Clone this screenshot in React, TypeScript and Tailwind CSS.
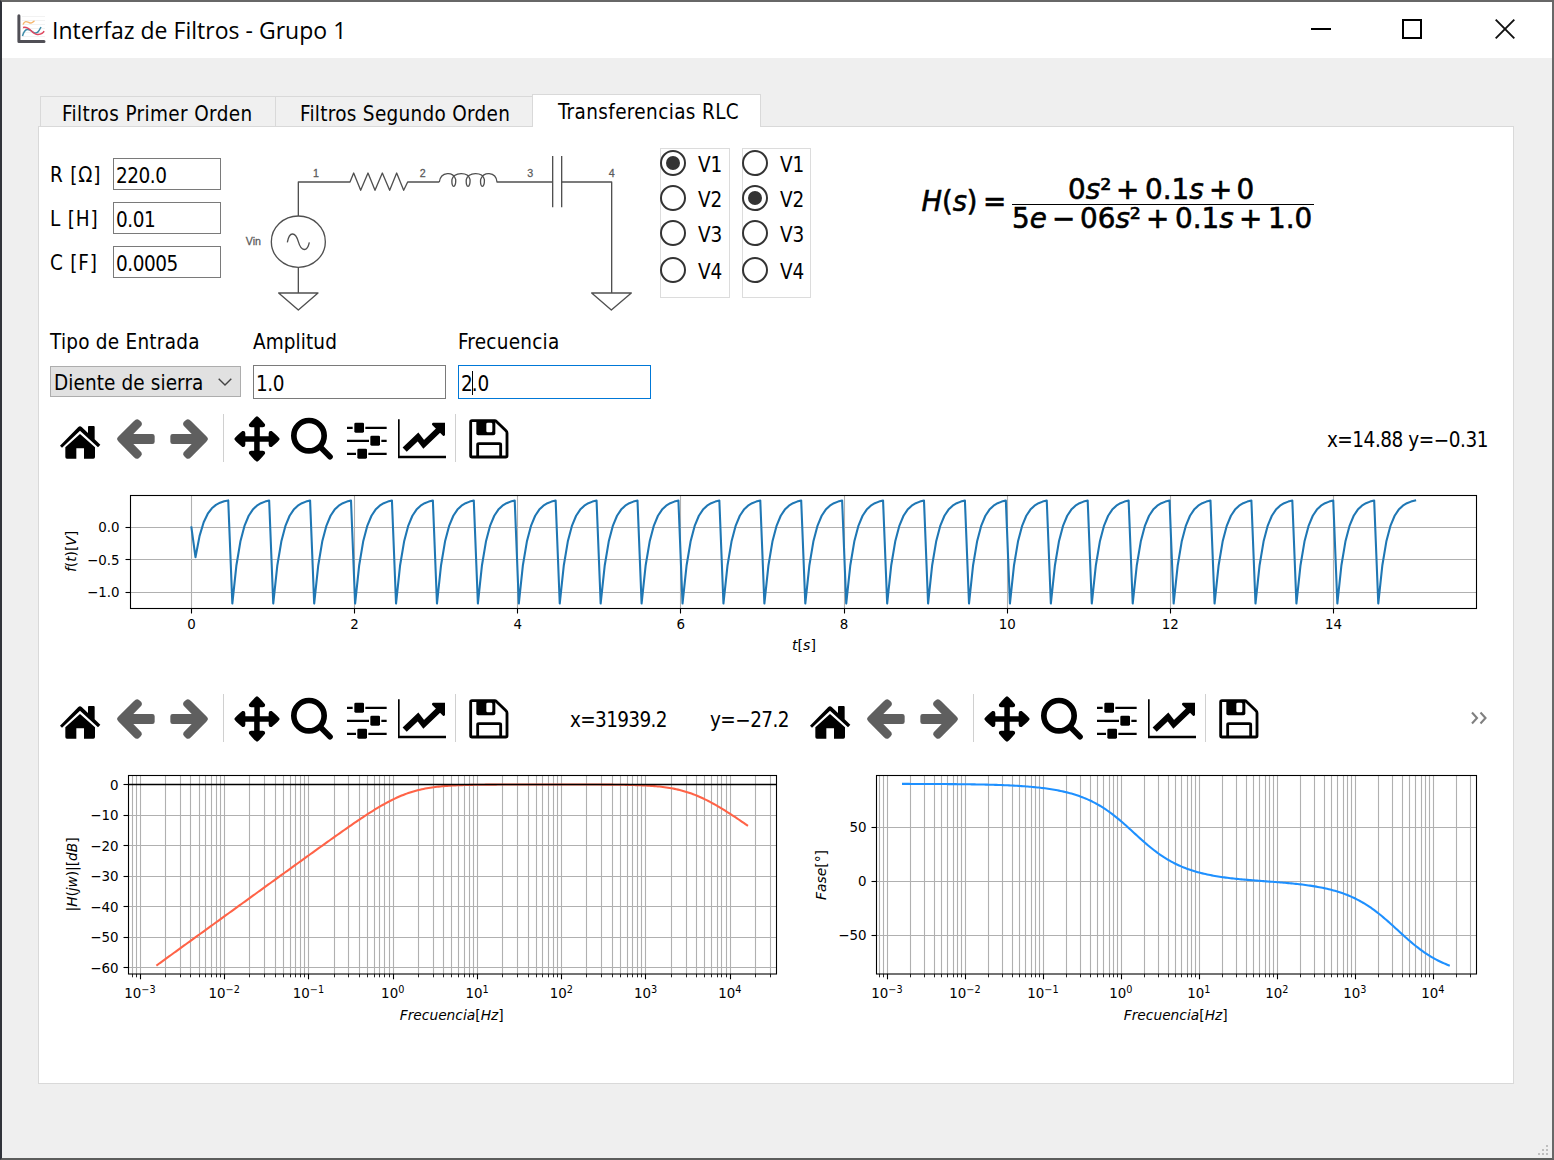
import React from "react";

const base = 'font-["DejaVu_Sans_Condensed","DejaVu_Sans",sans-serif] [font-stretch:condensed] text-[20.5px] leading-none text-black whitespace-pre';
const ui = base + " tracking-[0.25px]";
const tab = base + " tracking-[0.37px]";
const num = base + " tracking-[-0.45px]";
const PLOT_FONT = '"DejaVu Sans", sans-serif';

type IconProps = { x: number; w: number; className: string; children: React.ReactNode };

function Icon({ x, w, className, children }: IconProps) {
  return (
    <svg width={w} height={48} viewBox={`${x} 282 ${w * 3} 144`} className={`shrink-0 ${className}`}>
      {children}
    </svg>
  );
}

const ARROW =
  "M231 357 q1 -4 5 -8 L282 303 q8 -9 15 -3 l7 6 q4 6 0 11 L280 342 H337 q7 0 7 7 v16 q0 7 -7 7 H280 l24 25 q4 6 -1 11 l-6 6 q-7 6 -15 -2 L236 365 q-4 -4 -5 -8Z";
const ARM = "M651 289 q-4 0 -24 24 q-2 9 7 9 H643 V357 H659.5 V322 H668 q9 0 7 -9 Q655 289 651 289Z";

function Toolbar({ children }: { children?: React.ReactNode }) {
  return (
    <div className="flex h-12 shrink-0 items-center">
      <Icon x={54} w={44} className="ml-2">
        <path d="M60 377 L115 321 q5 -5 10 0 L144 339 V320 q0 -2 3 -2 H161 q3 0 3 3 V358 L181 374 L174 382 L120 332 L66 383Z" />
        <path d="M76 382 L120 342 L165 382 V411 q0 5 -5 5 H132 V385 H109 V416 H81 q-5 0 -5 -5Z" />
      </Icon>
      <Icon x={225} w={43} className="ml-[13px]">
        <path d={ARROW} fill="#5f5f5f" />
      </Icon>
      <Icon x={384} w={43} className="ml-[10px]">
        <path d={ARROW} fill="#5f5f5f" transform="translate(735 0) scale(-1 1)" />
      </Icon>
      <div className="ml-3 h-12 w-px bg-[#d0d0d0]" />
      <Icon x={579} w={48} className="ml-[9px]">
        {[0, 90, 180, 270].map((a) => (
          <path key={a} d={ARM} transform={`rotate(${a} 651 357)`} />
        ))}
      </Icon>
      <Icon x={747} w={46} className="ml-2">
        <circle cx="807" cy="347" r="45.5" fill="none" stroke="#000" strokeWidth="17" />
        <path d="M841 381 L870 410" stroke="#000" strokeWidth="17" strokeLinecap="round" />
      </Icon>
      <Icon x={915} w={43} className="ml-[10px]">
        <path
          d="M921 323.5 H938 M976 323.5 H1040 M921 362.5 H987 M1024 362.5 H1040 M921 401.5 H948 M985 401.5 H1040"
          stroke="#000"
          strokeWidth="7"
        />
        <rect x="943" y="308" width="29" height="30" rx="4" />
        <rect x="991" y="347" width="29" height="30" rx="4" />
        <rect x="952" y="386" width="29" height="30" rx="4" />
      </Icon>
      <Icon x={1071} w={50} className="ml-[9px]">
        <path d="M1074 298 H1079 V407 H1218 V415 H1074Z" />
        <path d="M1094 389 L1134 351 L1151 373 L1198 328" fill="none" stroke="#000" strokeWidth="18" />
        <path d="M1176 314 q-1 -4 3 -6 H1215 V345 q-3 4 -6 2Z" />
      </Icon>
      <div className="ml-2 h-12 w-px bg-[#d0d0d0]" />
      <Icon x={1284} w={42} className="ml-3">
        <path
          d="M1296 302 H1364 Q1367 302 1370 305 L1398 332 Q1401 335 1401 339 V407 q0 4 -4 4 H1296 q-4 0 -4 -4 V306 q0 -4 4 -4Z"
          fill="none"
          stroke="#000"
          strokeWidth="8.5"
        />
        <path d="M1309 302 H1366 V340 q0 6 -6 6 H1315 q-6 0 -6 -6Z" />
        <rect x="1339" y="308" width="18" height="29" rx="4" fill="#fff" />
        <path d="M1313 411 V374 q0 -3 4 -3 H1378 q4 0 4 3 V411" fill="none" stroke="#000" strokeWidth="8.5" />
      </Icon>
      {children}
    </div>
  );
}

function Field({ label, value }: { label: string; value: string }) {
  return (
    <div className="flex h-8 items-center justify-between">
      <span className={`pt-[3px] ${base} tracking-[0.8px]`}>{label}</span>
      <div className={`flex h-8 w-[108px] items-center border border-[#7a7a7a] bg-white pl-[2px] pt-[4px] ${num}`}>{value}</div>
    </div>
  );
}

function Radios({ selected, className }: { selected: number; className: string }) {
  return (
    <div className={`mt-[21px] h-[150px] shrink-0 border border-[#dcdcdc] pt-[1px] ${className}`}>
      {[1, 2, 3, 4].map((n) => (
        <div key={n} className={`flex h-[26px] items-center ${n === 4 ? "mt-[11px]" : n === 1 ? "" : "mt-[9px]"}`}>
          <div className="-ml-[1px] flex h-[26px] w-[26px] items-center justify-center rounded-full border-2 border-[#333]">
            {selected === n && <div className="h-[14px] w-[14px] rounded-full bg-[#333]" />}
          </div>
          <span className={`ml-3 pt-[4px] ${base}`}>{`V${n}`}</span>
        </div>
      ))}
    </div>
  );
}

function Circuit() {
  return (
    <svg width={420} height={180} viewBox="0 0 1260 540" className="ml-[9px] mt-[13px] shrink-0">
      <g fill="none" stroke="#505050" strokeWidth="4" strokeLinejoin="round">
        <path d="M205 228 V126 H360 L371 99 L392 151 L414 99 L435 151 L457 99 L479 151 L500 99 L521 151 L533 126 H628" />
        <path d="M628 126 C632 94 672 94 677 118 C679 146 663 146 666 118 C672 96 714 94 720 118 C722 146 706 146 709 118 C715 96 757 94 763 118 C765 146 749 146 752 118 C758 94 798 94 801 126 H968" />
        <path d="M968 48 V202 M995 48 V202 M995 126 H1145 V459" />
        <ellipse cx="205" cy="305" rx="81" ry="77" />
        <path d="M172 307 C178 274 196 274 205 305 C214 336 232 336 238 307" />
        <path d="M205 382 V459" />
        <path d="M146 459 H264 L205 510Z M1085 459 H1204 L1144 510Z" />
      </g>
      <g fontFamily='"Liberation Sans", sans-serif' fontSize="32" fill="#5a5a5a" stroke="#5a5a5a" strokeWidth="0.8" textAnchor="middle">
        <text x="258" y="112">1</text>
        <text x="578" y="112">2</text>
        <text x="901" y="112">3</text>
        <text x="1145" y="112">4</text>
        <text x="70" y="316">Vin</text>
      </g>
    </svg>
  );
}

function Formula() {
  const I = ({ children }: { children: string }) => <tspan fontStyle="italic">{children}</tspan>;
  return (
    <svg width={430} height={90} viewBox="0 0 430 90" className="ml-[89px] mt-[33px] shrink-0">
      <g fontFamily={PLOT_FONT} fontSize="27.8" fill="#000" stroke="#000" strokeWidth="0.6">
        <text x="21.5" y="51" textLength="56" lengthAdjust="spacingAndGlyphs"><I>H</I>(<I>s</I>)</text>
        <text x="83" y="51">=</text>
        <text x="168" y="38.5"><tspan>0</tspan><I>s</I>²</text>
        <text x="216" y="38.5">+</text>
        <text x="245" y="38.5">0.1<I>s</I></text>
        <text x="309" y="38.5">+</text>
        <text x="336.5" y="38.5">0</text>
        <text x="112" y="67.5">5<I>e</I></text>
        <text x="152" y="67.5">−</text>
        <text x="180" y="67.5">06<I>s</I>²</text>
        <text x="246" y="67.5">+</text>
        <text x="275" y="67.5">0.1<I>s</I></text>
        <text x="339" y="67.5">+</text>
        <text x="368" y="67.5">1.0</text>
      </g>
      <path d="M112 44.5 H414" stroke="#000" strokeWidth="1.2" />
    </svg>
  );
}

const snap = (v: number) => Math.floor(v) + 0.5;
const toPath = (pts: number[][]) => "M" + pts.map(([x, y]) => `${x.toFixed(2)} ${y.toFixed(2)}`).join("L");

function VLabel({ x, y, len, children }: { x: number; y: number; len: number; children: React.ReactNode }) {
  return (
    <text transform={`translate(${x} ${y}) rotate(-90)`} textAnchor="middle" textLength={len} lengthAdjust="spacingAndGlyphs" fontStyle="italic">
      {children}
    </text>
  );
}

function TimePlot() {
  const X = (t: number) => 191.4 + 81.58 * t;
  const Y = (v: number) => 527.4 - 64.8 * v;
  const dt = 15 / 299;
  const pts: number[][] = [];
  let v = 0;
  for (let i = 0; i < 300; i++) {
    if (i === 1) v = -0.46;
    else if (i > 0 && i % 10 === 0) v = -1.175;
    else if (i > 0) v = 0.44 + (v - 0.44) * Math.exp(-dt / 0.11);
    pts.push([X(i * dt), Y(v)]);
  }
  return (
    <svg width={1474} height={232} viewBox="39 462 1474 232" className="shrink-0">
      {[0, 2, 4, 6, 8, 10, 12, 14].map((t) => (
        <g key={t}>
          <path d={`M${snap(X(t))} 496 V608`} stroke="#b0b0b0" strokeWidth="1.1" />
          <path d={`M${snap(X(t))} 609 V613.5`} stroke="#000" strokeWidth="1.1" />
        </g>
      ))}
      {[0, -0.5, -1].map((q) => (
        <g key={q}>
          <path d={`M130 ${snap(Y(q))} H1476`} stroke="#b0b0b0" strokeWidth="1.1" />
          <path d={`M125.5 ${snap(Y(q))} H130`} stroke="#000" strokeWidth="1.1" />
        </g>
      ))}
      <path d={toPath(pts)} fill="none" stroke="#1f77b4" strokeWidth="2.08" strokeLinejoin="round" strokeLinecap="square" />
      <rect x="130.5" y="495.5" width="1346" height="113" fill="none" stroke="#000" strokeWidth="1.1" />
      <g fontFamily={PLOT_FONT} fontSize="13.4" fill="#000">
        {[0, 2, 4, 6, 8, 10, 12, 14].map((t) => (
          <text key={t} x={X(t)} y="629" textAnchor="middle">{t}</text>
        ))}
        {[0, -0.5, -1].map((q) => (
          <text key={q} x="119.5" y={Y(q) + 5} textAnchor="end">{q.toFixed(1).replace("-", "−")}</text>
        ))}
        <text x="804" y="650" textAnchor="middle" fontStyle="italic" textLength="24" lengthAdjust="spacingAndGlyphs">
          t<tspan fontStyle="normal">[</tspan>s<tspan fontStyle="normal">]</tspan>
        </text>
        <VLabel x={75.5} y={551.5} len={41}>
          f<tspan fontStyle="normal">(</tspan>t<tspan fontStyle="normal">)[</tspan>V<tspan fontStyle="normal">]</tspan>
        </VLabel>
      </g>
    </svg>
  );
}

type BodeProps = {
  left: number;
  width: number;
  box: [number, number];
  x0: number;
  dec: number;
  y0: number;
  unit: number;
  ticks: number[];
  color: string;
  value: (w: number) => number;
  zeroLine?: boolean;
  yLabel: React.ReactNode;
};

function BodePlot({ left, width, box, x0, dec, y0, unit, ticks, color, value, zeroLine, yLabel }: BodeProps) {
  const X = (lg: number) => x0 + dec * lg;
  const Y = (v: number) => y0 - unit * v;
  const [a, b] = box;
  const minors: number[] = [];
  for (let d = -4; d <= 4; d++)
    for (let m = 2; m < 10; m++) {
      const x = X(d + Math.log10(m));
      if (x > a + 1 && x < b - 1) minors.push(x);
    }
  const majors = [-3, -2, -1, 0, 1, 2, 3, 4];
  const pts: number[][] = [];
  for (let i = 0; i <= 350; i++) {
    const lw = -2 + (7 * i) / 350;
    pts.push([X(lw - Math.log10(2 * Math.PI)), Y(value(10 ** lw))]);
  }
  const mid = (a + b) / 2;
  return (
    <svg width={width} height={340} viewBox={`${left} 742 ${width} 340`} className="shrink-0">
      {minors.map((x) => (
        <g key={x}>
          <path d={`M${snap(x)} 776 V974`} stroke="#b0b0b0" strokeWidth="1.1" />
          <path d={`M${snap(x)} 974 V977.3`} stroke="#000" strokeWidth="0.85" />
        </g>
      ))}
      {majors.map((m) => (
        <g key={m}>
          <path d={`M${snap(X(m))} 776 V974`} stroke="#b0b0b0" strokeWidth="1.1" />
          <path d={`M${snap(X(m))} 974 V979.3`} stroke="#000" strokeWidth="1.1" />
        </g>
      ))}
      {ticks.map((q) => (
        <g key={q}>
          <path d={`M${a} ${snap(Y(q))} H${b}`} stroke="#b0b0b0" strokeWidth="1.1" />
          <path d={`M${a - 5} ${snap(Y(q))} H${a}`} stroke="#000" strokeWidth="1.1" />
        </g>
      ))}
      <path d={toPath(pts)} fill="none" stroke={color} strokeWidth="2.08" strokeLinejoin="round" strokeLinecap="square" />
      {zeroLine && <path d={`M${a} ${snap(Y(0))} H${b}`} stroke="#000" strokeWidth="1.3" />}
      <rect x={a} y="775.5" width={b - a} height="198.5" fill="none" stroke="#000" strokeWidth="1.1" />
      <g fontFamily={PLOT_FONT} fontSize="13.4" fill="#000">
        {majors.map((m) => (
          <text key={m} x={X(m) - 0.3} y="998" textAnchor="middle">
            10<tspan fontSize="9.7" dy="-5">{String(m).replace("-", "−")}</tspan>
          </text>
        ))}
        {ticks.map((q) => (
          <text key={q} x={a - 10} y={Y(q) + 5} textAnchor="end">{String(q).replace("-", "−")}</text>
        ))}
        <text x={mid - 0.8} y="1019.5" textAnchor="middle" fontStyle="italic" textLength="104" lengthAdjust="spacingAndGlyphs">
          Frecuencia<tspan fontStyle="normal">[</tspan>Hz<tspan fontStyle="normal">]</tspan>
        </text>
        {yLabel}
      </g>
    </svg>
  );
}

const TAU = 0.11;
const LC = 5e-6;
const gainDb = (w: number) => 20 * Math.log10((TAU * w) / Math.hypot(1 - LC * w * w, TAU * w));
const phaseDeg = (w: number) => 90 - (Math.atan2(TAU * w, 1 - LC * w * w) * 180) / Math.PI;

function TitleBar() {
  return (
    <div className="flex h-14 shrink-0 items-center bg-white">
      <svg width="30" height="30" viewBox="0 0 30 30" className="-mt-[2px] ml-[15px] shrink-0">
        <path d="M5 2.5 H28 M5 6.5 H28 M5 10.5 H28 M5 14.5 H28 M5 18.5 H28 M5 22.5 H28" stroke="#f2f2f2" />
        <path d="M1.9 1.7 V27.4 H27" fill="none" stroke="#504f56" strokeWidth="3" strokeLinecap="round" strokeLinejoin="round" />
        <path d="M6 10.5 C8 5.5 11 8.5 13 9 S16 7.5 17.5 7" fill="none" stroke="#f5b56b" strokeWidth="1.4" />
        <path d="M5.5 22 C8 13 12 15 16 18 S22 17 24 13" fill="none" stroke="#3d8ba8" strokeWidth="1.5" />
        <path d="M6 13.5 C13 11.5 15 21 21 20.5 Q26 20 27 17" fill="none" stroke="#e0475f" strokeWidth="1.5" />
      </svg>
      <span className='ml-[5px] whitespace-pre font-["Open_Sans","Noto_Sans",sans-serif] text-[23px] leading-none tracking-[0.02px] text-black'>
        Interfaz de Filtros - Grupo 1
      </span>
      <div className="-mt-[2px] ml-auto mr-[37px] flex items-center">
        <div className="h-[2px] w-5 bg-black" />
        <div className="ml-[71px] h-5 w-5 border-2 border-black" />
        <svg width="20" height="20" viewBox="0 0 20 20" className="ml-[73px]">
          <path d="M0.7 0.7 L19.3 19.3 M19.3 0.7 L0.7 19.3" stroke="#111" strokeWidth="1.9" />
        </svg>
      </div>
    </div>
  );
}

export default function App() {
  return (
    <div className="flex h-[1160px] w-[1554px] flex-col overflow-hidden border-2 border-b-[#5c5d5c] border-l-[#30333a] border-r-[#686868] border-t-[#676767] bg-[#efefef]">
      <TitleBar />
      <div className="flex grow flex-col px-9 pr-[38px] pt-9">
        <div className="z-10 flex h-[33px] shrink-0 items-end pl-[2px]">
          <div className={`mb-px flex h-[30px] w-[236px] items-center border border-b-0 border-[#d9d9d9] bg-[#f0f0f0] pl-[21px] pt-[5px] ${tab}`}>
            Filtros Primer Orden
          </div>
          <div className={`mb-px flex h-[30px] w-[256px] items-center border border-x-0 border-b-0 border-[#d9d9d9] bg-[#f0f0f0] pl-[24px] pt-[5px] ${base} tracking-[0.3px]`}>
            Filtros Segundo Orden
          </div>
          <div className={`flex h-[33px] w-[229px] items-center border border-b-0 border-[#d9d9d9] bg-white pl-[25px] pt-[2px] ${tab}`}>
            Transferencias RLC
          </div>
        </div>
        <div className="-mt-px flex h-[958px] w-[1476px] shrink-0 flex-col border border-[#d9d9d9] bg-white">
          <div className="flex h-[199px] shrink-0 items-start pl-[11px]">
            <div className="mt-[31px] flex w-[171px] shrink-0 flex-col gap-3">
              <Field label="R [Ω]" value="220.0" />
              <Field label="L [H]" value="0.01" />
              <Field label="C [F]" value="0.0005" />
            </div>
            <Circuit />
            <Radios selected={1} className="ml-[10px] w-[70px]" />
            <Radios selected={2} className="ml-3 w-[69px]" />
            <Formula />
          </div>
          <div className="flex shrink-0 gap-3 pl-[11px]">
            <div className="w-[191px]">
              <div className={`flex h-8 items-center ${ui}`}>Tipo de Entrada</div>
              <div className={`mt-2 flex h-[31px] items-center justify-between border border-[#adadad] bg-[#e1e1e1] pl-[3px] pr-[8px] pt-[3px] ${base} tracking-[0.1px]`}>
                Diente de sierra
                <svg width="14" height="8" viewBox="0 0 14 8" className="-mt-[2px]">
                  <path d="M0.7 0.7 L7 7 L13.3 0.7" fill="none" stroke="#444" strokeWidth="1.4" />
                </svg>
              </div>
            </div>
            <div className="w-[193px]">
              <div className={`flex h-8 items-center ${base} tracking-[0.1px]`}>Amplitud</div>
              <div className={`mt-[7px] flex h-[34px] items-center border border-[#7a7a7a] pl-[2px] pt-[4px] ${num}`}>1.0</div>
            </div>
            <div className="w-[193px]">
              <div className={`flex h-8 items-center ${ui}`}>Frecuencia</div>
              <div className={`mt-[7px] flex h-[34px] items-center border border-[#0078d7] pl-[2px] pt-[4px] ${base}`}>
                2<span className="-mx-px -mt-[3px] h-6 w-px bg-black" />.0
              </div>
            </div>
          </div>
          <div className="mt-[15px] pl-[11px] pr-[25px]">
            <Toolbar>
              <span className={`ml-auto pt-[4px] ${num}`}>x=14.88 y=−0.31</span>
            </Toolbar>
          </div>
          <TimePlot />
          <div className="flex shrink-0">
            <div className="w-[750px] pl-[11px]">
              <Toolbar>
                <span className={`ml-[60px] pt-[4px] ${base} tracking-[-0.65px]`}>x=31939.2</span>
                <span className={`ml-auto pt-[4px] ${base} tracking-[-0.55px]`}>y=−27.2</span>
              </Toolbar>
            </div>
            <div className="w-[724px] pl-[11px] pr-[26px]">
              <Toolbar>
                <svg width="16" height="14" viewBox="0 0 16 14" className="ml-auto">
                  <path d="M1 1.5 L6 7 L1 12.5 M9.5 1.5 L14.5 7 L9.5 12.5" fill="none" stroke="#808080" strokeWidth="2.1" />
                </svg>
              </Toolbar>
            </div>
          </div>
          <div className="flex shrink-0">
            <BodePlot
              left={39}
              width={750}
              box={[128.5, 776.5]}
              x0={393.02}
              dec={84.27}
              y0={784.5}
              unit={3.05}
              ticks={[0, -10, -20, -30, -40, -50, -60]}
              color="#ff6347"
              value={gainDb}
              zeroLine
              yLabel={
                <VLabel x={76.5} y={874.5} len={74}>
                  <tspan fontStyle="normal">|</tspan>H<tspan fontStyle="normal">(</tspan>jw<tspan fontStyle="normal">)|[</tspan>dB
                  <tspan fontStyle="normal">]</tspan>
                </VLabel>
              }
            />
            <BodePlot
              left={789}
              width={724}
              box={[876.5, 1476.5]}
              x0={1121.2}
              dec={77.97}
              y0={881.3}
              unit={1.083}
              ticks={[50, 0, -50]}
              color="#1e90ff"
              value={phaseDeg}
              yLabel={
                <VLabel x={826} y={875} len={50}>
                  Fase<tspan fontStyle="normal">[°]</tspan>
                </VLabel>
              }
            />
          </div>
        </div>
        <div className="mb-[3px] mt-auto -mr-[34px] grid w-[10px] grid-cols-3 gap-[2px] self-end">
          {[0, 0, 1, 0, 1, 1, 1, 1, 1].map((on, i) => (
            <div key={i} className={`h-[2px] w-[2px] ${on ? "bg-[#bfbfbf]" : ""}`} />
          ))}
        </div>
      </div>
    </div>
  );
}
